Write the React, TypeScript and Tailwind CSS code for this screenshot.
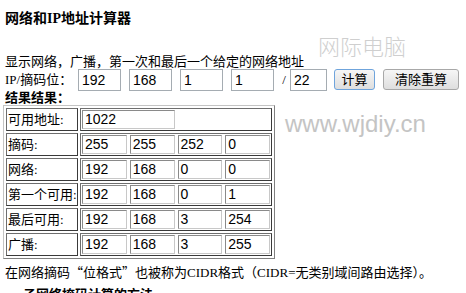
import React from "react";

const cjk = { fontFamily: '"Liberation Serif", "Noto Sans CJK SC", serif' };
const cjkOnly = { fontFamily: '"Noto Sans CJK SC", sans-serif' };
const num = { fontFamily: '"Liberation Sans", sans-serif' };

function Box({ v, span }: { v?: string; span?: boolean }) {
  return (
    <div
      className={`h-[19px] border border-t-[#8a8a8a] border-l-[#8a8a8a] border-r-[#c8c8c8] border-b-[#c8c8c8] pl-[2px] text-[14px] leading-[17px] text-black ${span ? "col-span-2" : ""}`}
      style={num}
    >
      {v}
    </div>
  );
}

function Row({ label, vals, first }: { label: string; vals: string[]; first?: boolean }) {
  return (
    <div className="flex gap-[2px] h-[23px]">
      <div
        className="w-[72px] h-[23px] border border-t-[#6e6e6e] border-l-[#6e6e6e] border-r-[#3a3a3a] border-b-[#3a3a3a] pl-[1px] text-[13px] leading-[21px] text-black whitespace-nowrap"
        style={cjk}
      >
        {label}
      </div>
      <div className="w-[192px] h-[23px] border border-t-[#6e6e6e] border-l-[#6e6e6e] border-r-[#3a3a3a] border-b-[#3a3a3a] p-[1px]">
        <div className="grid grid-cols-4 gap-[3px]">
          {first ? <Box v={vals[0]} span /> : vals.map((v, i) => <Box key={i} v={v} />)}
        </div>
      </div>
    </div>
  );
}

function Input({ v, w }: { v: string; w: string }) {
  return (
    <div
      className={`${w} h-[22px] border border-[#a5acb2] pl-[3px] text-[14px] leading-[20px] text-black`}
      style={num}
    >
      {v}
    </div>
  );
}

export default function App() {
  return (
    <div className="relative w-[466px] h-[293px] overflow-hidden bg-white text-black" style={cjk}>
      <div
        className="absolute left-[318px] top-[34px] text-[22px] leading-none text-[#cfcfcf] font-light"
        style={cjkOnly}
      >
        网际电脑
      </div>
      <div
        className="absolute left-[285px] top-[112px] text-[24px] leading-none text-[#c4c4c4]"
        style={{ fontFamily: '"Liberation Sans", sans-serif' }}
      >
        www.wjdiy.cn
      </div>

      <div className="relative pt-[11px]">
        <div className="pl-[5px] h-[16px] text-[14px] leading-[16px] font-bold whitespace-nowrap">
          网络和IP地址计算器
        </div>
        <div className="mt-[28px] pl-[5px] h-[14px] text-[13px] leading-[14px] whitespace-nowrap">
          显示网络，广播，第一次和最后一个给定的网络地址
        </div>
        <div className="flex items-start h-[22px] pl-[5px]">
          <div className="w-[73px] text-[13px] leading-[22px] whitespace-nowrap">IP/摘码位：</div>
          <div className="flex gap-[8px]">
            <Input v="192" w="w-[43px]" />
            <Input v="168" w="w-[43px]" />
            <Input v="1" w="w-[43px]" />
            <Input v="1" w="w-[43px]" />
          </div>
          <div className="w-[16px] text-center text-[13px] leading-[22px] pl-[4px]">/</div>
          <Input v="22" w="w-[37px]" />
          <button
            className="ml-[7px] w-[41px] h-[21px] rounded-[3px] border border-[#6fa4dc] bg-gradient-to-b from-[#f6f6f6] to-[#dedede] text-[13px] leading-[19px] text-black"
            style={cjk}
          >
            计算
          </button>
          <button
            className="ml-[8px] w-[76px] h-[21px] rounded-[3px] border border-[#a8a8a8] bg-gradient-to-b from-[#f6f6f6] to-[#dedede] text-[13px] leading-[19px] text-black"
            style={cjk}
          >
            清除重算
          </button>
        </div>
        <div className="pl-[5px] h-[14px] text-[13px] leading-[14px] font-bold whitespace-nowrap">结果结果：</div>
        <div className="ml-[3px] w-[272px] border border-t-[#c4c4c4] border-l-[#c4c4c4] border-r-[#808080] border-b-[#808080] p-[2px] flex flex-col gap-[2px]">
          <Row label="可用地址:" vals={["1022"]} first />
          <Row label="摘码:" vals={["255", "255", "252", "0"]} />
          <Row label="网络:" vals={["192", "168", "0", "0"]} />
          <Row label="第一个可用:" vals={["192", "168", "0", "1"]} />
          <Row label="最后可用:" vals={["192", "168", "3", "254"]} />
          <Row label="广播:" vals={["192", "168", "3", "255"]} />
        </div>
        <div className="mt-[6px] pl-[5px] h-[14px] text-[13px] leading-[14px] whitespace-nowrap">
          在网络摘码<span style={cjkOnly}>“</span>位格式<span style={cjkOnly}>”</span>也被称为CIDR格式（CIDR=无类别域间路由选择）。
        </div>
        <div className="mt-[9px] pl-[23px] h-[14px] text-[13px] leading-[14px] font-bold whitespace-nowrap">
          子网络掩码计算的方法
        </div>
      </div>
    </div>
  );
}
